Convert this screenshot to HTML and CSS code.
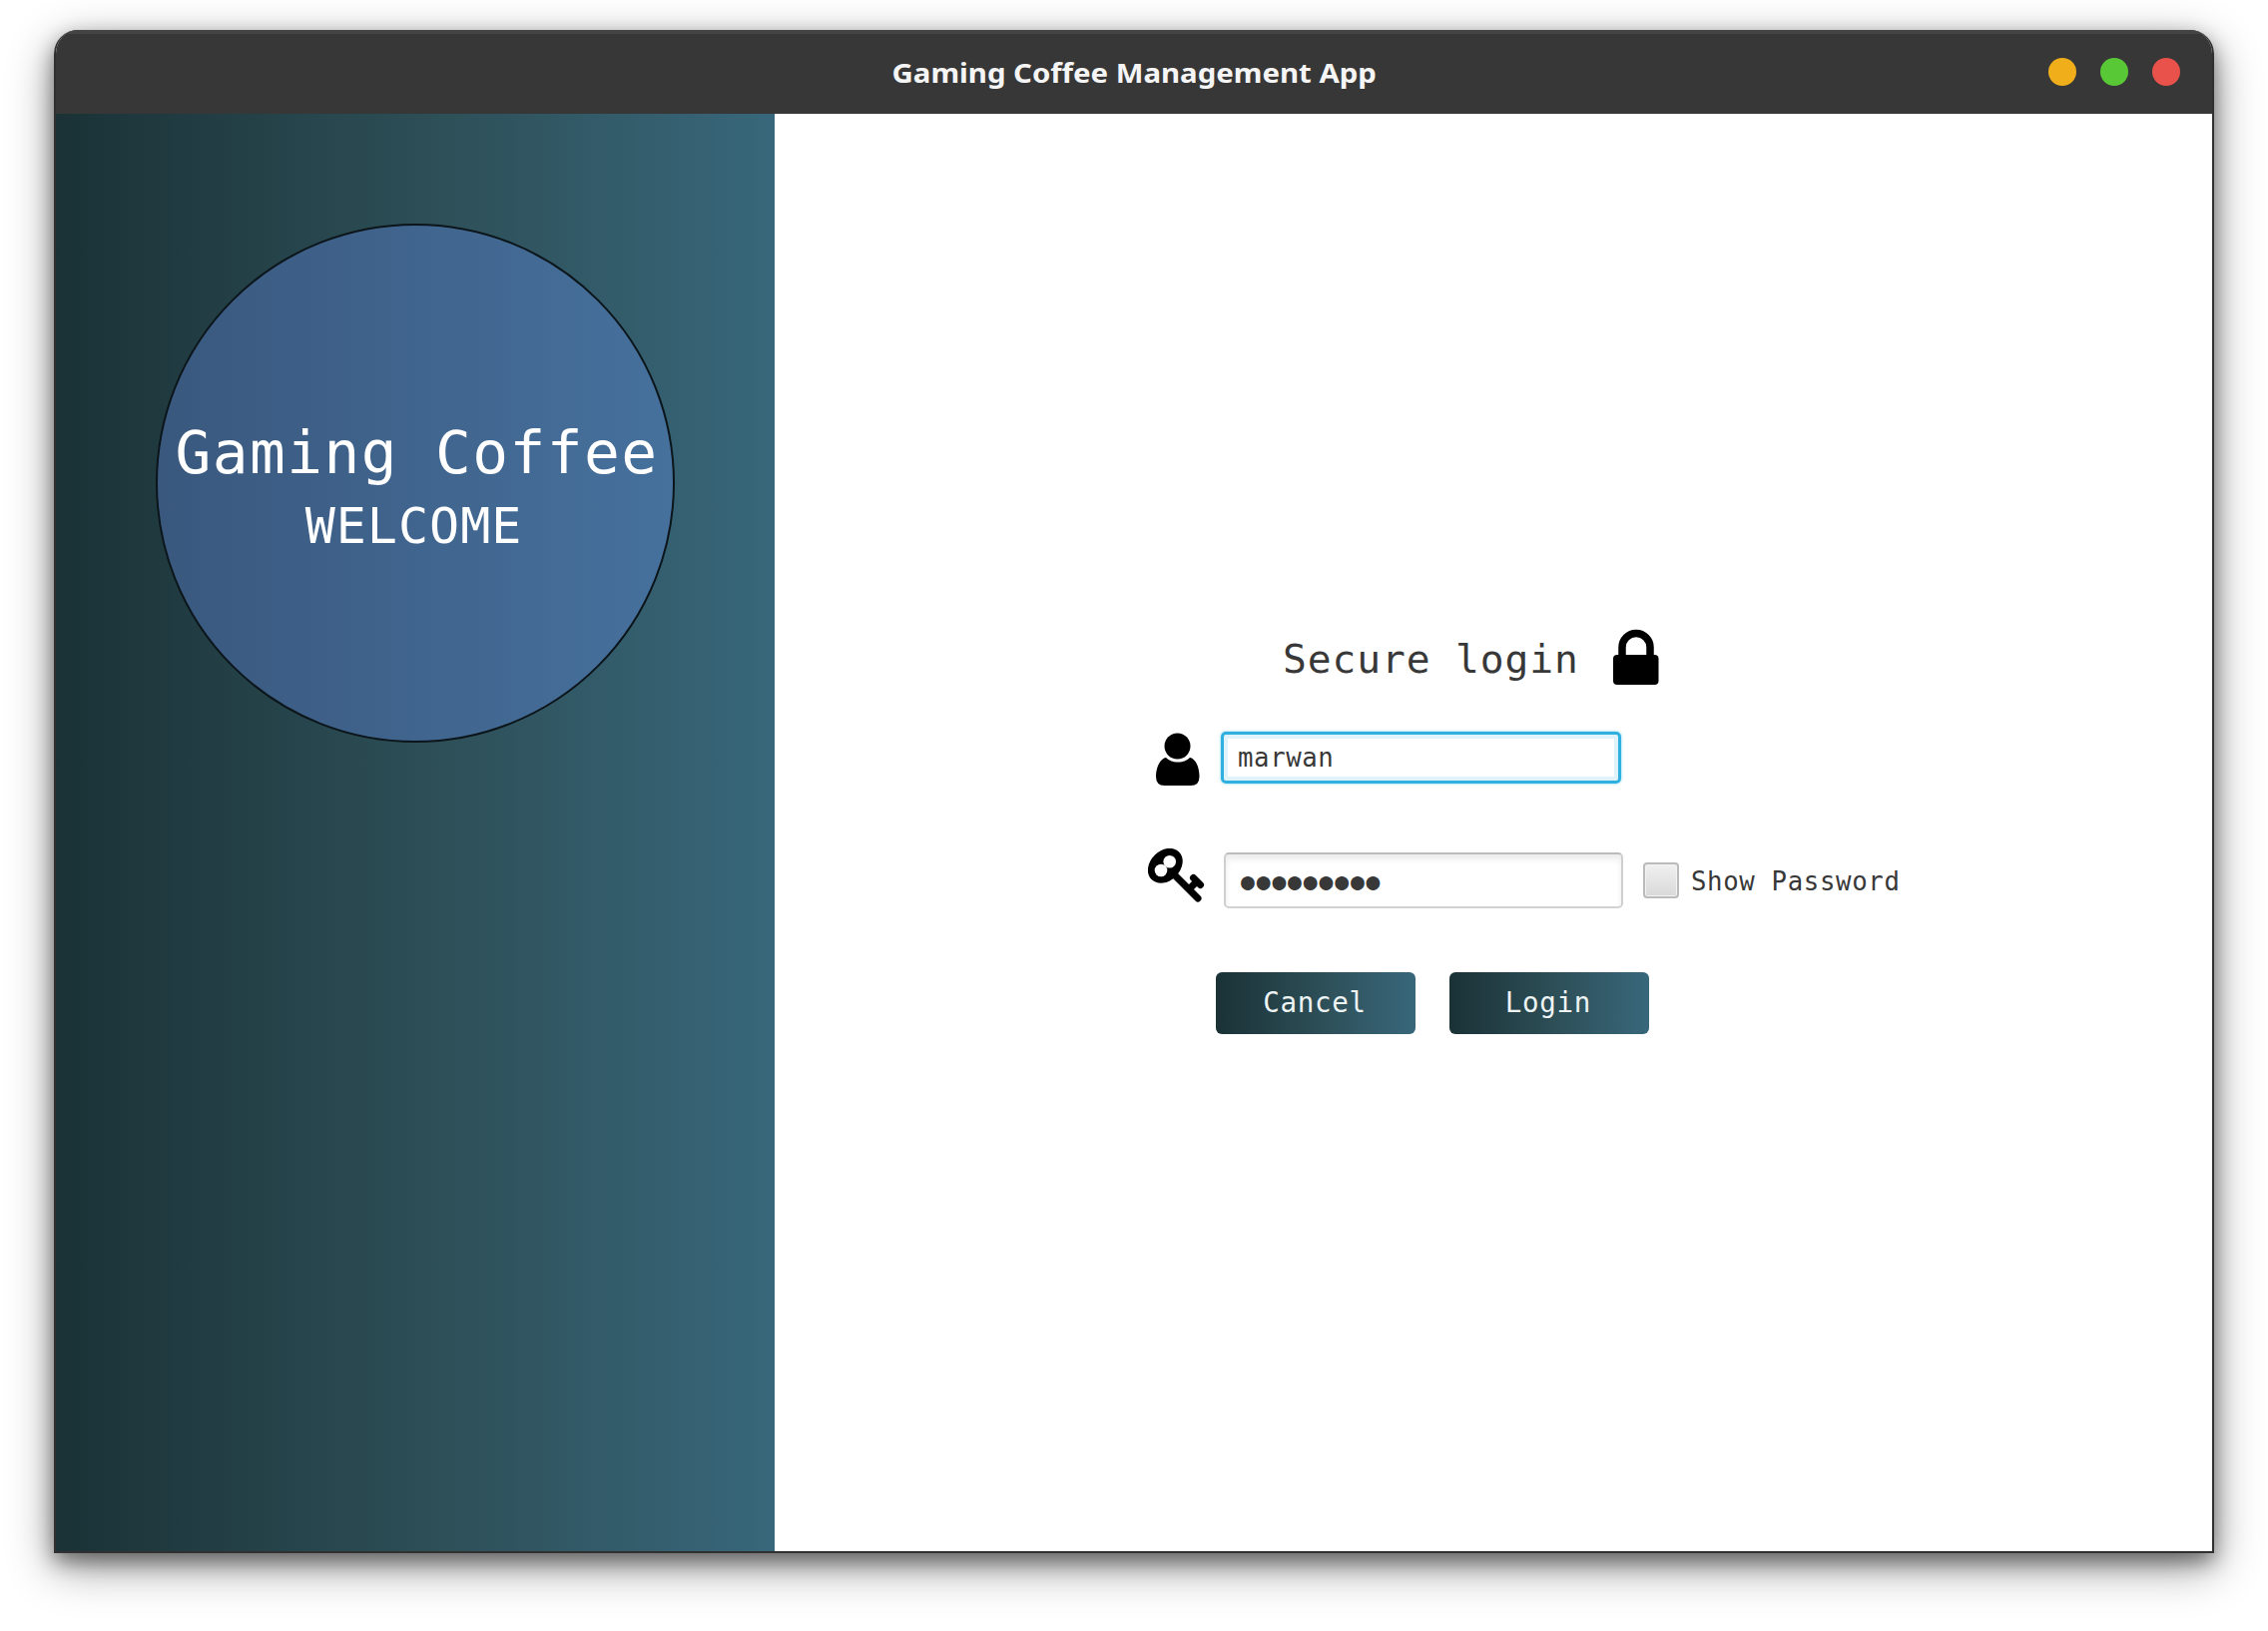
FILE: index.html
```html
<!DOCTYPE html>
<html lang="en">
<head>
<meta charset="utf-8">
<title>Gaming Coffee Management App</title>
<link rel="stylesheet" href="styles.css">
</head>
<body>
<div class="window">
  <header class="titlebar">
    <h1 class="title">Gaming Coffee Management App</h1>
    <div class="controls"><span class="dot minimize"></span><span class="dot maximize"></span><span class="dot close"></span></div>
  </header>
  <div class="content">
    <aside class="sidebar">
      <div class="badge">
        <div class="brand">Gaming Coffee</div>
        <div class="welcome">WELCOME</div>
      </div>
    </aside>
    <main class="main">
      <div class="row heading">
        <h2 class="form-title">Secure login</h2>
        <svg class="lock" width="46" height="57" viewBox="0 0 46 57"><path d="M9 28V18.500a14 14 0 0 1 28 0V28" fill="none" stroke="#000" stroke-width="7.500"/><rect x="0" y="26" width="45.500" height="30" rx="4"/></svg>
      </div>
      <div class="row user-row">
        <svg class="user" width="44" height="54" viewBox="0 0 44 54"><circle cx="21.500" cy="13.500" r="13"/><path d="M10 25C16 31 28 31 34 25C40 26 43.500 35 43.500 44Q43.500 53 35 53H8.500Q0 53 0 44C0 35 4 26 10 25Z"/></svg>
        <div class="field focused">marwan</div>
      </div>
      <div class="row password-row">
        <svg class="key" width="57" height="55" viewBox="0 0 57 55">
          <ellipse cx="17.300" cy="17.300" rx="19.500" ry="15" transform="rotate(-45 17.300 17.300)"/>
          <path d="M26 26L50 50M45.500 29.500L52.500 36.500M49 33L42 40" fill="none" stroke="#000" stroke-width="7" stroke-linecap="round"/>
          <circle cx="21.700" cy="13.300" r="6.300" fill="#fff"/><circle cx="13" cy="22" r="6.300" fill="#fff"/>
        </svg>
        <div class="field password">●●●●●●●●●</div>
        <span class="checkbox"></span>
        <span class="check-label">Show Password</span>
      </div>
      <div class="row buttons">
        <button class="button">Cancel</button>
        <button class="button">Login</button>
      </div>
    </main>
  </div>
</div>
</body>
</html>
```
FILE: styles.css
```css
* { box-sizing: border-box; }
body { margin: 0; padding: 30px 54px 78px; background: #fff; font-family: "DejaVu Sans Mono", monospace; color: #383838; }
h1, h2 { margin: 0; font-weight: 400; }
.window { width: 2164px; height: 1526px; border: 2px solid #303030; border-top: 0; border-radius: 24px 24px 0 0; box-shadow: 0 14px 46px rgba(0,0,0,.42), 0 8px 20px rgba(0,0,0,.42); display: flex; flex-direction: column; overflow: hidden; }
.titlebar { height: 84px; flex: none; background: #373737; border-top: 4px solid #444; padding-bottom: 4px; display: grid; grid-template-columns: 1fr auto 1fr; align-items: center; }
.title { grid-column: 2; font: 700 27.500px/40px "Noto Sans", sans-serif; transform: scaleX(1.068); color: #f5f5f5; white-space: nowrap; padding-top: 1px; }
.controls { display: flex; gap: 24px; justify-self: end; margin-right: 32px; }
.dot { width: 28px; height: 28px; border-radius: 50%; }
.minimize { background: #f0ae1b; }
.maximize { background: #59c837; }
.close { background: #e9524a; }
.content { flex: 1; display: flex; }
.sidebar { width: 720px; padding: 110px 0 0 100px; background: linear-gradient(90deg, #1a3236, #2e5059 55%, #38677b); }
.badge { width: 520px; height: 520px; border: 2px solid #0b151a; border-radius: 50%; background: linear-gradient(90deg, #3a587e, #46719d); color: #fff; text-align: center; white-space: nowrap; padding-top: 192px; }
.brand { font-size: 59.500px; line-height: 72px; letter-spacing: 1.400px; margin-left: 3px; }
.welcome { font-size: 50px; line-height: 75px; letter-spacing: 1px; margin-right: 3px; }
.main { flex: 1; background: #fff; padding-top: 516px; }
.row { display: flex; align-items: flex-start; white-space: nowrap; }
.heading { margin-left: 509px; height: 103px; }
.form-title { width: 331px; font-size: 39.600px; line-height: 60px; letter-spacing: .9px; }
.user-row { margin-left: 382px; height: 117px; }
.user { margin-top: 1px; }
.field { width: 401px; font-size: 25.700px; letter-spacing: .6px; border-radius: 5px; }
.focused { height: 52px; margin-left: 21px; border: 3px solid #2fb0de; padding-left: 14px; line-height: 46px; box-shadow: 0 0 3px #7fd0ec, inset 0 0 0 4px #e1f3fa; }
.password-row { margin-left: 374px; height: 124px; }
.password { width: 400px; height: 56px; margin: 4px 0 0 19px; border: 2px solid #c9c9c9; border-color: #bcbcbc #cfcfcf #d2d2d2; padding-left: 15px; box-shadow: inset 0 5px 6px #ececec; line-height: 54px; font-size: 23px; letter-spacing: 1.850px; }
.checkbox { width: 36px; height: 36px; margin: 14px 0 0 20px; border: 2px solid #bbb; border-radius: 4px; background: linear-gradient(#f0f0f0, #d9d9d9); box-shadow: inset 0 0 0 1px #f3f3f3; }
.check-label { margin: 13px 0 0 12px; font-size: 25.700px; line-height: 40px; letter-spacing: .65px; }
.buttons { margin-left: 442px; gap: 34px; }
.button { width: 200px; height: 62px; border: 0; padding: 0 2px 2px 0; border-radius: 6px; background: linear-gradient(90deg, #1a3236, #2e5059 55%, #38677b); color: #eef3f4; font: 27.500px/60px "DejaVu Sans Mono", monospace; letter-spacing: .7px; }
```
